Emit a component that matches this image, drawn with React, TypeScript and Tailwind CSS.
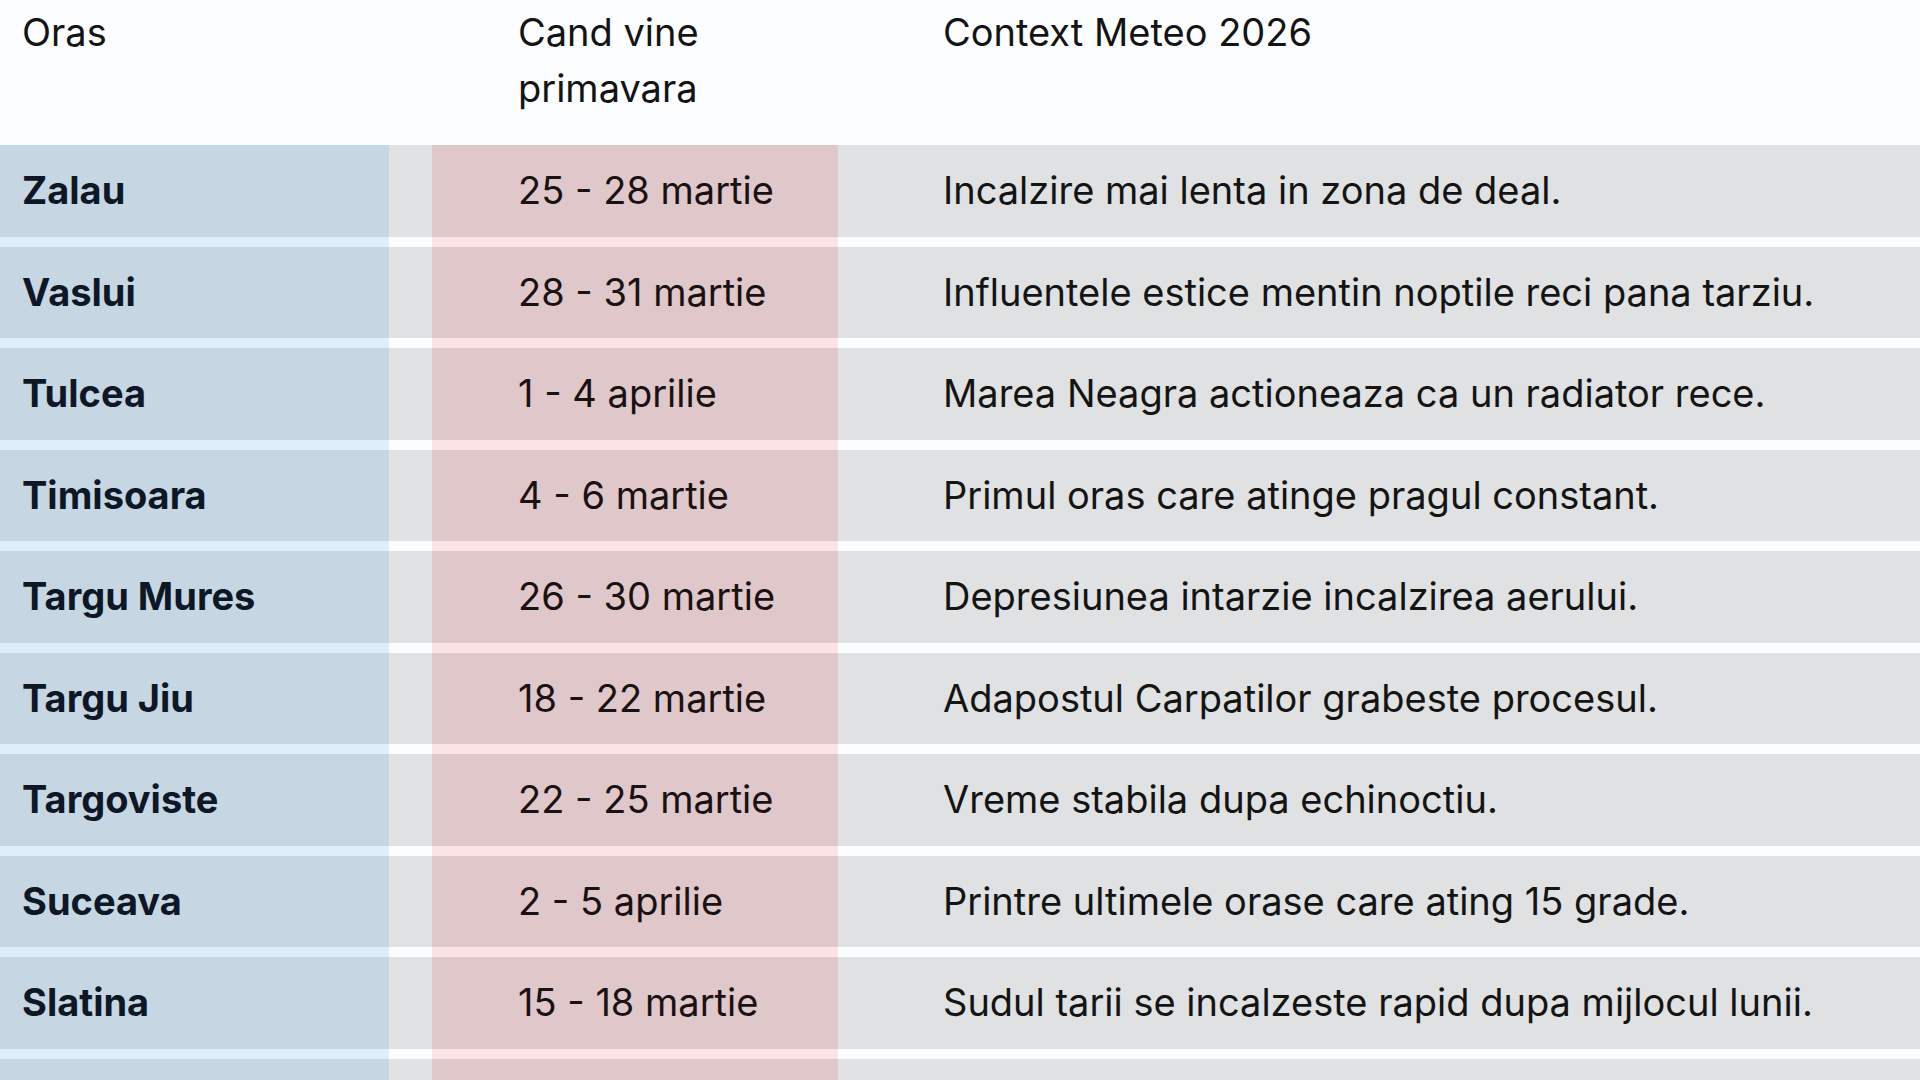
const rows = [
  { oras: "Zalau", cand: "25 - 28 martie", context: "Incalzire mai lenta in zona de deal." },
  { oras: "Vaslui", cand: "28 - 31 martie", context: "Influentele estice mentin noptile reci pana tarziu." },
  { oras: "Tulcea", cand: "1 - 4 aprilie", context: "Marea Neagra actioneaza ca un radiator rece." },
  { oras: "Timisoara", cand: "4 - 6 martie", context: "Primul oras care atinge pragul constant." },
  { oras: "Targu Mures", cand: "26 - 30 martie", context: "Depresiunea intarzie incalzirea aerului." },
  { oras: "Targu Jiu", cand: "18 - 22 martie", context: "Adapostul Carpatilor grabeste procesul." },
  { oras: "Targoviste", cand: "22 - 25 martie", context: "Vreme stabila dupa echinoctiu." },
  { oras: "Suceava", cand: "2 - 5 aprilie", context: "Printre ultimele orase care ating 15 grade." },
  { oras: "Slatina", cand: "15 - 18 martie", context: "Sudul tarii se incalzeste rapid dupa mijlocul lunii." },
  // next row only peeks in at the bottom edge
  { oras: "", cand: "", context: "" },
];

const App = () => {
  return (
    <div className="h-[1080px] w-full overflow-hidden bg-[#fbfdfe] font-['Inter',sans-serif] text-[38px] leading-[1.45] text-[#141414]">
      {/* header */}
      <div className="grid h-[145px] grid-cols-[389px_43px_406px_1fr] pt-[4px] leading-[56px]">
        <div className="pl-[22px]">Oras</div>
        <div />
        <div className="w-[300px] pl-[86px]">Cand vine primavara</div>
        <div className="pl-[105px]">Context Meteo 2026</div>
      </div>

      {/* body */}
      <div className="flex flex-col">
        {rows.map((r, i) => (
          <div key={i} className="grid h-[101.5px] grid-cols-[389px_43px_406px_1fr]">
            <div className="flex items-center border-b-[10px] border-[#deeefb] bg-[#c6d6e3] pl-[22px] font-bold text-[#0d1726]">
              {r.oras}
            </div>
            <div className="border-b-[10px] border-[#fbfdfe] bg-[#dfe1e2]" />
            <div className="flex items-center border-b-[10px] border-[#fde3e3] bg-[#e0c7c9] pl-[86px] text-[#1a1212]">
              {r.cand}
            </div>
            <div className="flex items-center border-b-[10px] border-[#fbfdfe] bg-[#dfe1e2] pl-[105px]">
              {r.context}
            </div>
          </div>
        ))}
      </div>
    </div>
  );
};

export default App;
